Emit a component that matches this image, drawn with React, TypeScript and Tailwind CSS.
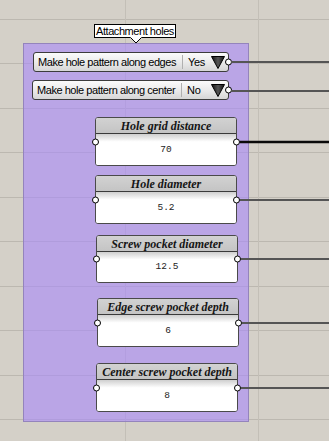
import React from "react";

const hLines = [19, 63, 108, 152, 197, 241, 286, 330, 375, 419];
const vLines = [125, 258];
const wires: { y: number; x: number; dark?: boolean }[] = [
  { y: 62, x: 231 },
  { y: 91, x: 231 },
  { y: 142, x: 240, dark: true },
  { y: 200, x: 240 },
  { y: 259, x: 241 },
  { y: 323, x: 242 },
  { y: 388, x: 241 },
];

function Port({ side }: { side: "left" | "right" }) {
  return (
    <div
      className={
        side === "left"
          ? "absolute left-[-4px] top-1/2 -translate-y-1/2 w-[7px] h-[7px] rounded-full bg-white border-[1.5px] border-black"
          : "absolute right-[-4px] top-1/2 -translate-y-1/2 w-[7px] h-[7px] rounded-full bg-white border-[1.5px] border-black"
      }
    />
  );
}

function ValueList({ label, value, className }: { label: string; value: string; className: string }) {
  return (
    <div
      className={
        "relative h-[20px] flex items-center rounded-[3px] border border-[#3c3c3c] bg-gradient-to-b from-[#fbfbfb] via-[#ebebeb] to-[#d6d6d6] " +
        className
      }
    >
      <div className="w-[148px] pl-[4px] text-[11px] tracking-[-0.45px] text-black whitespace-nowrap leading-none">
        {label}
      </div>
      <div className="w-px h-[14px] bg-[#b0b0b0]" />
      <div className="flex-1 pl-[5px] text-[11px] tracking-[-0.3px] text-black leading-none">{value}</div>
      <svg width="14" height="13" viewBox="0 0 14 13" className="mr-[3px]">
        <defs>
          <linearGradient id="tg" x1="0" y1="0" x2="1" y2="0">
            <stop offset="0" stopColor="#111" />
            <stop offset="0.5" stopColor="#555" />
            <stop offset="1" stopColor="#111" />
          </linearGradient>
        </defs>
        <polygon points="0.5,0.5 13.5,0.5 7,12.5" fill="url(#tg)" stroke="#000" strokeWidth="1" />
      </svg>
      <Port side="right" />
    </div>
  );
}

function NumberBox({
  title,
  value,
  className,
}: {
  title: string;
  value: string;
  className: string;
}) {
  return (
    <div
      className={
        "relative w-[142px] flex flex-col rounded-[3px] border border-[#4a4a4a] bg-white " + className
      }
    >
      <div className="h-[16px] shrink-0 flex items-center justify-center rounded-t-[2px] bg-gradient-to-b from-[#d2d2d2] to-[#c4c4c4] border-b-[1.5px] border-[#3a3a3a]">
        <span
          className="text-[12px] font-bold italic text-[#151515] leading-none whitespace-nowrap"
          style={{ fontFamily: '"Liberation Serif", "DejaVu Serif", serif' }}
        >
          {title}
        </span>
      </div>
      <div className="flex-1 flex items-center justify-center rounded-b-[2px] bg-gradient-to-b from-[#cfcfcf] via-white via-[25%] to-white">
        <span
          className="text-[9.5px] text-[#222] leading-none"
          style={{ fontFamily: '"Liberation Mono", "DejaVu Sans Mono", monospace' }}
        >
          {value}
        </span>
      </div>
      <Port side="left" />
      <Port side="right" />
    </div>
  );
}

export default function App() {
  return (
    <div
      className="relative w-[329px] h-[441px] overflow-hidden bg-[#d4d0c8]"
      style={{ fontFamily: '"Liberation Sans", Arial, sans-serif' }}
    >
      <svg className="absolute inset-0" width="329" height="441">
        {hLines.map((y) => (
          <line key={"h" + y} x1="0" x2="329" y1={y + 0.5} y2={y + 0.5} stroke="#bcb8b0" strokeWidth="1" />
        ))}
        {vLines.map((x) => (
          <line key={"v" + x} x1={x + 0.5} x2={x + 0.5} y1="0" y2="441" stroke="#c3bfb7" strokeWidth="1" />
        ))}
      </svg>

      {/* Tooltip */}
      <div className="absolute left-[94px] top-[24px] w-[82px] h-[14px] bg-white border border-black flex items-center justify-center z-20">
        <span className="text-[11px] tracking-[-0.45px] text-black leading-none whitespace-nowrap">
          Attachment holes
        </span>
      </div>
      <svg className="absolute left-[130px] top-[37px] z-20" width="12" height="7" viewBox="0 0 12 7">
        <polygon points="0,0 12,0 6,6" fill="white" />
        <polyline points="0.5,0.5 6,6 11.5,0.5" fill="none" stroke="black" strokeWidth="1" />
      </svg>

      {/* Group */}
      <div className="absolute left-[23px] top-[43px] w-[226px] h-[379px] bg-[rgba(169,136,250,0.6)] border border-[#9484bc] flex flex-col items-start pt-[8px]">
        <ValueList label="Make hole pattern along edges" value="Yes" className="ml-[9px] w-[196px]" />
        <ValueList label="Make hole pattern along center" value="No" className="ml-[8px] mt-[8px] w-[197px]" />
        <NumberBox title="Hole grid distance" value="70" className="ml-[71px] mt-[17px] h-[49px]" />
        <NumberBox title="Hole diameter" value="5.2" className="ml-[71px] mt-[9px] h-[49px]" />
        <NumberBox title="Screw pocket diameter" value="12.5" className="ml-[72px] mt-[11px] h-[48px]" />
        <NumberBox title="Edge screw pocket depth" value="6" className="ml-[73px] mt-[15px] h-[49px]" />
        <NumberBox title="Center screw pocket depth" value="8" className="ml-[72px] mt-[16px] h-[49px]" />
      </div>

      {/* Wires */}
      <svg className="absolute inset-0 z-10 pointer-events-none" width="329" height="441">
        {wires.map((w) => (
          <line
            key={w.y}
            x1={w.x}
            x2="329"
            y1={w.y}
            y2={w.y}
            stroke={w.dark ? "#0a0a0a" : "#555"}
            strokeWidth={w.dark ? 2.5 : 2}
          />
        ))}
      </svg>
    </div>
  );
}
